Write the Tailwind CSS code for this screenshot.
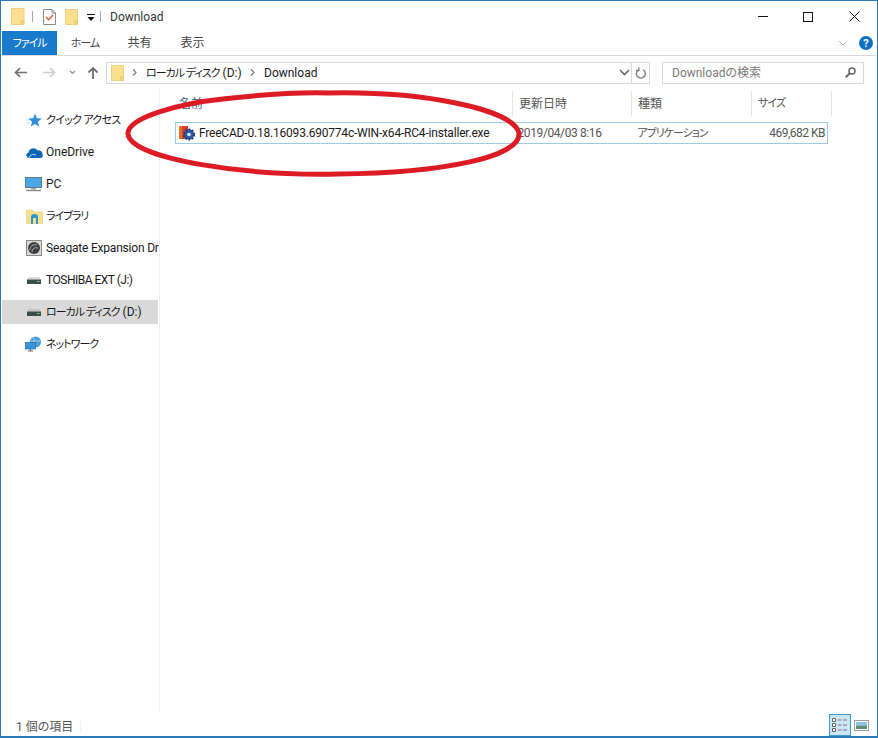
<!DOCTYPE html>
<html lang="ja"><head><meta charset="utf-8">
<script src="https://cdn.jsdelivr.net/npm/@tailwindcss/browser@4"></script>
</head>
<body class="m-0 bg-white">
<div class="relative w-[878px] h-[738px] overflow-hidden bg-white border border-b-2 border-[#2a7ab8] px-px pt-px flex flex-col text-[12px] leading-none text-[#1a1a1a] font-['Roboto','Noto_Sans_CJK_JP',sans-serif] [font-feature-settings:'palt']">

  <!-- title bar -->
  <div class="h-[29px] flex items-center shrink-0">
    <svg class="ml-[9px]" width="14" height="17" viewBox="0 0 14 17"><path d="M.5.5h12.500v16H.5z" fill="#fbe08f" stroke="#f0d27e"/><path d="M10 12.500h3v4h-3z" fill="#f4d27a" stroke="#e9c566" stroke-width=".6"/></svg>
    <div class="ml-[7px] w-px h-[11px] bg-[#a8a8a8]"></div>
    <svg class="ml-[10px]" width="13" height="16" viewBox="0 0 13 16"><path d="M.5.5h8.500l3.500 3.500v11.500H.5z" fill="#fff" stroke="#8a8a8a"/><path d="M9 .5v3.500h3.500" fill="none" stroke="#8a8a8a"/><path d="M3 8l2.500 2.700L10 6" fill="none" stroke="#e0562c" stroke-width="1.400"/></svg>
    <svg class="ml-[9px]" width="13" height="16" viewBox="0 0 13 16"><path d="M.5.5h12v15H.5z" fill="#fbe08f" stroke="#f0d27e"/><path d="M9.500 11.500h3v4h-3z" fill="#f4d27a" stroke="#e9c566" stroke-width=".6"/></svg>
    <svg class="ml-[9px] mt-[2px]" width="8" height="8" viewBox="0 0 8 8"><path d="M0 .5h8" stroke="#111"/><path d="M.5 3h7L4 7z" fill="#111"/></svg>
    <div class="ml-[5px] w-px h-[11px] bg-[#a8a8a8]"></div>
    <span class="ml-[9px] text-[#333]">Download</span>
    <div class="ml-auto flex items-center">
      <div class="w-[10px] h-px bg-[#111]"></div>
      <div class="ml-[35px] w-[10px] h-[10px] border border-[#111]"></div>
      <svg class="ml-[36px] mr-[16px]" width="11" height="11" viewBox="0 0 11 11"><path d="M.5.500l10 10M10.500.500l-10 10" stroke="#111" stroke-width="1"/></svg>
    </div>
  </div>

  <!-- ribbon tabs -->
  <div class="h-[25px] flex items-stretch border-b border-[#d9d9d9] shrink-0">
    <div class="w-[55px] bg-[#1979ca] text-white flex items-center justify-center text-[11px] tracking-[-1px]">ファイル</div>
    <div class="w-[56px] flex items-center justify-center text-[#444] text-[11px] tracking-[-1px]">ホーム</div>
    <div class="w-[53px] flex items-center justify-center text-[#444]">共有</div>
    <div class="w-[53px] flex items-center justify-center text-[#444]">表示</div>
    <div class="ml-auto flex items-center">
      <svg width="10" height="6" viewBox="0 0 10 6"><path d="M1 1l4 4 4-4" fill="none" stroke="#b8b8b8" stroke-width="1"/></svg>
      <div class="ml-[11px] mr-[3px] w-[14px] h-[14px] rounded-full bg-[#1070c4] text-white flex items-center justify-center text-[11px] font-bold">?</div>
    </div>
  </div>

  <!-- address row -->
  <div class="h-[33px] flex items-center shrink-0">
    <svg class="ml-[12px]" width="13" height="11" viewBox="0 0 13 11"><path d="M13 5.500H2M6 1.200L1.500 5.500 6 9.800" fill="none" stroke="#707070" stroke-width="1.700"/></svg>
    <svg class="ml-[16px]" width="13" height="11" viewBox="0 0 13 11"><path d="M0 5.500h11M7 1.200l4.500 4.300L7 9.800" fill="none" stroke="#d0d0d0" stroke-width="1.700"/></svg>
    <svg class="ml-[13px]" width="7" height="5" viewBox="0 0 7 5"><path d="M1 1l2.500 2.500L6 1" fill="none" stroke="#8a8a8a" stroke-width="1.200"/></svg>
    <svg class="ml-[11px]" width="12" height="13" viewBox="0 0 12 13"><path d="M6 13V2M1.500 6.500L6 2l4.500 4.500" fill="none" stroke="#707070" stroke-width="1.800"/></svg>
    <div class="ml-[7px] w-[544px] h-[22px] border border-[#d9d9d9] flex items-center">
      <svg class="ml-[4px]" width="13" height="16" viewBox="0 0 13 16"><path d="M.5.5h12v15H.5z" fill="#fbe08f" stroke="#f0d27e"/><path d="M9.500 11.500h3v4h-3z" fill="#f4d27a" stroke="#e9c566" stroke-width=".6"/></svg>
      <svg class="ml-[8px]" width="5" height="7" viewBox="0 0 5 7"><path d="M1 .5l3 3-3 3" fill="none" stroke="#777" stroke-width="1.100"/></svg>
      <span class="ml-[9px] w-[96px] whitespace-nowrap"><span class="text-[11px] tracking-[-1px]">ローカル ディスク</span> (D:)</span>
      <svg class="ml-[8px]" width="5" height="7" viewBox="0 0 5 7"><path d="M1 .5l3 3-3 3" fill="none" stroke="#777" stroke-width="1.100"/></svg>
      <span class="ml-[9px]">Download</span>
      <svg class="ml-auto" width="11" height="7" viewBox="0 0 11 7"><path d="M1 1l4.500 4.500L10 1" fill="none" stroke="#666" stroke-width="1.600"/></svg>
      <div class="w-[18px] h-full border-l border-[#d9d9d9] flex items-center justify-center ml-[1px]">
        <svg width="11" height="13" viewBox="0 0 11 13"><path d="M3 3.200a4.500 4.500 0 1 0 4.700 0M3.300 1v3H.5" fill="none" stroke="#777" stroke-width="1.300" transform="translate(.5 .5)"/></svg>
      </div>
    </div>
    <div class="ml-[12px] w-[202px] h-[22px] border border-[#d9d9d9] flex items-center pl-[9px] text-[#7a7a7a]">
      <span>Downloadの検索</span>
      <svg class="ml-auto mr-[7px]" width="11" height="11" viewBox="0 0 11 11"><circle cx="7" cy="4" r="3" fill="none" stroke="#666" stroke-width="1.500"/><path d="M4.800 6.200L.8 10.200" stroke="#666" stroke-width="2"/></svg>
    </div>
  </div>

  <!-- body -->
  <div class="flex flex-1 min-h-0">
    <!-- sidebar -->
    <div class="w-[158px] shrink-0 border-r border-[#f0f0f0] pt-[15px]">
      <div class="h-[32px] flex items-center">
        <svg class="ml-[24px]" width="16" height="15" viewBox="0 0 16 15"><path d="M9 .5l1.800 4.700 5 .3-3.900 3.200 1.300 4.900L9 11l-4.200 2.600 1.300-4.900L2.200 5.500l5-.3z" fill="#2f8fd8"/><path d="M0 7h3M1 10h3" stroke="#bcd9ef"/></svg>
        <span class="ml-[4px] whitespace-nowrap text-[11px] tracking-[-0.7px]">クイック アクセス</span>
      </div>
      <div class="h-[32px] flex items-center">
        <svg class="ml-[24px]" width="17" height="11" viewBox="0 0 17 11"><path d="M2.800 11A2.800 2.800 0 0 1 2.500 5.500 5 5 0 0 1 11.500 3.500 3.800 3.800 0 0 1 16.500 7 3 3 0 0 1 15 11z" fill="#0f66b7"/><path d="M3 11c1-3 4-4.500 7-3" fill="none" stroke="#fff" stroke-width=".8"/></svg>
        <span class="ml-[3px]">OneDrive</span>
      </div>
      <div class="h-[32px] flex items-center">
        <svg class="ml-[23px]" width="17" height="15" viewBox="0 0 17 15"><rect x=".5" y=".5" width="16" height="10" fill="#4ba6e6" stroke="#5a7a90"/><path d="M6 11h5v1.500H6z" fill="#9aa"/><path d="M1 13.500h15" stroke="#8a8a8a" stroke-width="1.500"/></svg>
        <span class="ml-[4px]">PC</span>
      </div>
      <div class="h-[32px] flex items-center">
        <svg class="ml-[24px]" width="17" height="15" viewBox="0 0 17 15"><path d="M.5 1h6l1.500 2h8.500v11.500H.5z" fill="#fadf8c" stroke="#e8cb72" stroke-width=".6"/><path d="M5 15V8a3.500 3 0 0 1 7 0v7h-2V9H7v6z" fill="#2f97c9"/></svg>
        <span class="ml-[3px] text-[11px] tracking-[-1px]">ライブラリ</span>
      </div>
      <div class="h-[32px] flex items-center">
        <svg class="ml-[24px] shrink-0" width="16" height="16" viewBox="0 0 16 16"><rect x=".5" y=".5" width="15" height="15" fill="#d8d8d8" stroke="#8a8a8a"/><circle cx="8" cy="8" r="6" fill="#3f3f3f"/><path d="M4 10c0-4 3-6 7-5M6 12c0-3 2-5 6-4" fill="none" stroke="#bbb" stroke-width=".9"/></svg>
        <span class="ml-[4px] whitespace-nowrap overflow-hidden tracking-[-0.2px]">Seagate Expansion Dr</span>
      </div>
      <div class="h-[32px] flex items-center">
        <svg class="ml-[25px]" width="14" height="7" viewBox="0 0 14 7"><path d="M2 0h10l2 2.500H0z" fill="#d6d6d6"/><rect y="2.500" width="14" height="4.500" fill="#3d4a4e"/><path d="M10 4.500h2.500" stroke="#5ee06a"/></svg>
        <span class="ml-[5px] tracking-[-0.5px]">TOSHIBA EXT (J:)</span>
      </div>
      <div class="h-[24px] my-[4px] mr-[1px] bg-[#d9d9d9] flex items-center">
        <svg class="ml-[25px]" width="14" height="7" viewBox="0 0 14 7"><path d="M2 0h10l2 2.500H0z" fill="#c4c4c4"/><rect y="2.500" width="14" height="4.500" fill="#3d4a4e"/><path d="M10 4.500h2.500" stroke="#5ee06a"/></svg>
        <span class="ml-[5px] whitespace-nowrap"><span class="text-[11px] tracking-[-1px]">ローカル ディスク</span> (D:)</span>
      </div>
      <div class="h-[32px] flex items-center">
        <svg class="ml-[23px]" width="17" height="16" viewBox="0 0 17 16"><circle cx="10.500" cy="6" r="5.500" fill="#4a9bdc"/><path d="M8 1.500c2 2 2 7 0 9M6 5h9" stroke="#bfe0f5" fill="none" stroke-width=".7"/><rect x=".5" y="6.500" width="10" height="6.500" fill="#3a93d8" stroke="#2a6fa8" stroke-width=".7"/><path d="M3 15h5M5.500 13v2" stroke="#666"/></svg>
        <span class="ml-[4px] text-[11px] tracking-[-1px]">ネットワーク</span>
      </div>
    </div>

    <!-- list -->
    <div class="flex-1 min-w-0 text-[#555]">
      <div class="h-[25px] flex items-stretch pl-[13px] mt-[2px] shrink-0">
        <div class="w-[340px] flex items-center pl-[6px] text-[#4c607a] border-r border-[#e5e5e5]">名前</div>
        <div class="w-[119px] flex items-center pl-[6px] border-r border-[#e5e5e5]">更新日時</div>
        <div class="w-[120px] flex items-center pl-[6px] border-r border-[#e5e5e5]">種類</div>
        <div class="w-[80px] flex items-center pl-[6px] border-r border-[#e5e5e5] text-[11px] tracking-[-1px]">サイズ</div>
      </div>
      <div class="ml-[15px] mt-[6px] w-[653px] h-[22px] border border-[#9dcbe3] flex items-center">
        <svg class="ml-[2px] shrink-0" width="18" height="16" viewBox="0 0 18 16"><path d="M1 1h9v13H1z" fill="#d9432a"/><path d="M1 1h3v13H1z" fill="#e8702a"/><circle cx="11" cy="9.500" r="5" fill="#2d5aa8" stroke="#1d3a70" stroke-dasharray="2 1.200" stroke-width="2"/><circle cx="11" cy="9.500" r="1.800" fill="#dfe9f5"/></svg>
        <span class="ml-[3px] w-[313px] text-[#1a1a1a] whitespace-nowrap tracking-[-0.2px]">FreeCAD-0.18.16093.690774c-WIN-x64-RC4-installer.exe</span>
        <span class="ml-[6px] w-[120px] text-[#555] whitespace-nowrap tracking-[-0.4px]">2019/04/03 8:16</span>
        <span class="w-[100px] text-[#555] whitespace-nowrap text-[11px] tracking-[-1px]">アプリケーション</span>
        <span class="w-[90px] pr-[2px] text-right text-[#555] whitespace-nowrap tracking-[-0.5px]">469,682 KB</span>
      </div>
    </div>
  </div>

  <!-- status bar -->
  <div class="h-[24px] shrink-0 flex items-center text-[#555]">
    <span class="ml-[14px] mt-[5px]">1 個の項目</span>
    <div class="ml-[7px] mt-[5px] w-px h-[12px] bg-[#f0f0f0]"></div>
    <div class="ml-auto flex items-end h-full">
      <div class="w-[22px] h-[22px] border border-[#3f9ad0] bg-[#cde6f7] flex items-center justify-center">
        <svg width="16" height="14" viewBox="0 0 16 14"><path d="M.5.500h3v3h-3zM.5 5.500h3v3h-3zM.5 10.500h3v3h-3z" fill="#fff" stroke="#666"/><path d="M6 2h3.500M11 2h4M6 7h3.500M11 7h4M6 12h3.500M11 12h4" stroke="#777" stroke-width="1.200"/></svg>
      </div>
      <div class="ml-[3px] mr-[7px] mb-[4px]">
        <svg width="15" height="11" viewBox="0 0 15 11" class="mb-[1px]"><rect x=".5" y=".5" width="14" height="10" fill="#fff" stroke="#9a9a9a"/><rect x="2" y="2" width="11" height="3.500" fill="#8cc0e6"/><rect x="2" y="5.500" width="11" height="3.500" fill="#5f8f74"/></svg>
      </div>
    </div>
  </div>

  <!-- hand-drawn red ellipse -->
  <svg class="absolute left-[122px] top-[88px] pointer-events-none" width="404" height="92" viewBox="0 0 404 92" fill="none">
    <path d="M 205 4 C 300 2 390 20 396 44 C 398 68 320 84 215 85 C 120 87 8 70 5 45 C 4 28 60 14 100 10 C 135 6 170 3 205 4 Z" stroke="#dc1b24" stroke-width="5"/>
  </svg>
</div>
</body></html>
